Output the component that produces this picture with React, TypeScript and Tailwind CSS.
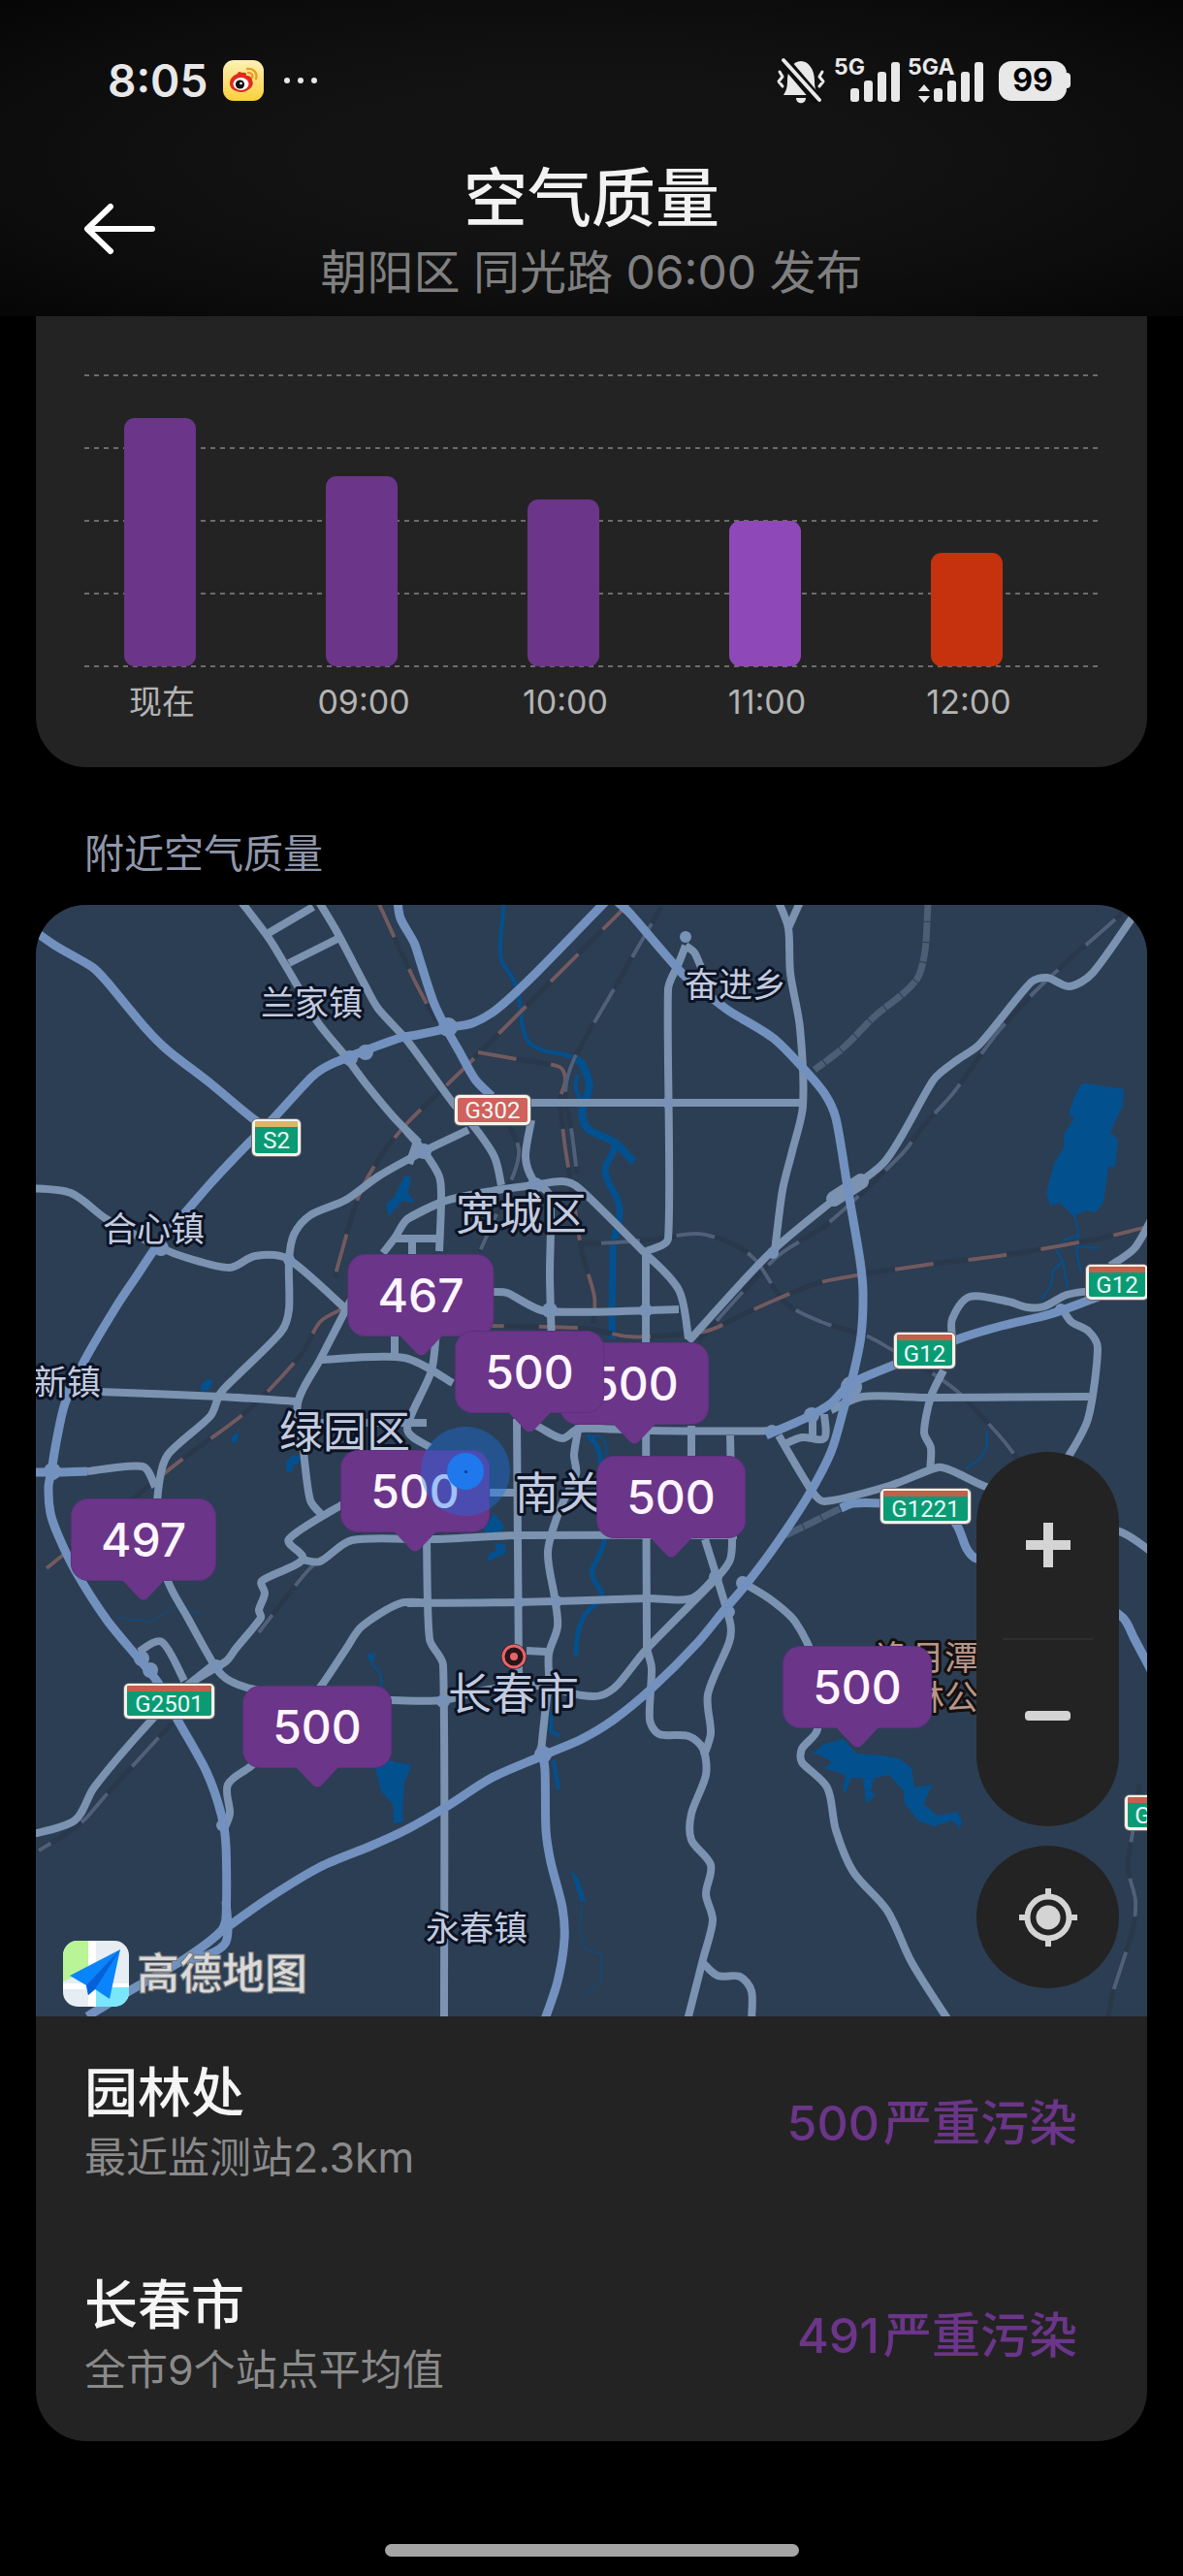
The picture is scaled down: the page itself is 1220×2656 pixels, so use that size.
import { useId } from "react";

// Map drawing units: the tile starts at (37, 933) and is 1146 wide and high
const MAP = { x: 37, y: 933, size: 1146 };

const hours = [
  { label: "现在", percent: 85, color: "bg-[#6b3589]" },
  { label: "09:00", percent: 65, color: "bg-[#6b3589]" },
  { label: "10:00", percent: 57, color: "bg-[#6b3589]" },
  { label: "11:00", percent: 50, color: "bg-[#8f48b8]" },
  { label: "12:00", percent: 39, color: "bg-[#c6320d]" },
];

const stations = [
  { name: "园林处", detail: "最近监测站2.3km", aqi: 500, level: "严重污染" },
  { name: "长春市", detail: "全市9个站点平均值", aqi: 491, level: "严重污染" },
];

const pins = [
  { aqi: 467, x: 434, y: 1293 },
  { aqi: 500, x: 654, y: 1384 },
  { aqi: 500, x: 546, y: 1372 },
  { aqi: 500, x: 692, y: 1501 },
  { aqi: 500, x: 428, y: 1495 },
  { aqi: 497, x: 148, y: 1545 },
  { aqi: 500, x: 327, y: 1738 },
  { aqi: 500, x: 884, y: 1697 },
];

const expressways = [
  "463,1060 430,1067 413,1070 377,1083 340,1098 322,1110 283,1152 257,1178 220,1217 193,1248 163,1283 140,1317 120,1347 87,1403 67,1447 58,1487 53,1517 50,1533 52,1560 60,1583 78,1620 110,1670 143,1710 163,1735 183,1773 213,1827 228,1870 233,1903 233,1977 227,1992 190,2020 133,2053 90,2079",
  "30,956 57,975 95,997 110,1012 150,1060 173,1083 217,1117 263,1155 283,1165",
  "233,1960 235,1990 232,2004 218,2014 192,2022",
  "233,1988 277,1957 330,1925 383,1903 420,1886 460,1863 507,1833 553,1813 567,1807 600,1793 633,1773 673,1740 720,1693 747,1660 770,1633 800,1593 833,1543 857,1497 870,1453 880,1417 888,1377 890,1333 887,1300 875,1230 862,1153 850,1127 827,1100 797,1070 753,1043 733,1028 703,1003 650,942 637,930",
  "624,930 553,1003 513,1040 487,1055 463,1059",
  "410,930 413,947 427,972 433,990 447,1033 460,1060 473,1083 490,1113 507,1130",
  "790,1480 833,1461 857,1447 877,1427 923,1407 990,1380 1033,1367 1083,1355 1130,1338 1190,1316",
  "867,1555 880,1550 910,1550 970,1555 987,1573 997,1597 1007,1607 1080,1620 1157,1667 1170,1690 1187,1722",
  "30,1518 60,1518 90,1517",
  "558,1800 562,1825 563,1887 568,1920 580,1967 582,2000 575,2043 562,2082",
];

const roads = [
  "249,930 277,967 293,993 307,1017 327,1053 357,1090 377,1117 407,1153 432,1178",
  "418,1165 437,1187 453,1213 455,1237 453,1290",
  "483,1165 437,1187 390,1213 357,1237 320,1253 303,1273 298,1300 298,1350 290,1373 243,1420 227,1437 217,1460 173,1500 164,1530 162,1580 173,1630 193,1667 223,1720 237,1733 263,1742 330,1752 403,1753 457,1753 503,1742 553,1738 600,1748 620,1748 637,1737 667,1700 740,1626 753,1608 755,1583 753,1480",
  "430,1177 422,1200",
  "329,930 347,960 377,1017 390,1040 420,1073 467,1137 490,1163 510,1193 517,1222",
  "277,962 323,935",
  "298,993 350,967",
  "30,1225 73,1230 110,1257 167,1287 193,1297 237,1307 263,1295 297,1298 357,1350",
  "453,1240 420,1257 408,1275 395,1292",
  "407,1277 453,1277",
  "420,1257 460,1238 513,1227 550,1222 580,1218 597,1225 663,1290 700,1330 710,1380",
  "425,1277 425,1295",
  "362,1340 330,1402 307,1447 313,1497 320,1547 333,1563",
  "330,1402 417,1400 467,1426",
  "407,1378 407,1402",
  "60,1433 103,1435 227,1440 307,1445",
  "327,1467 440,1467",
  "90,1517 147,1512 160,1533",
  "355,1550 298,1587 312,1608 270,1630 273,1643 267,1660 269,1668 243,1700 233,1713 193,1738 153,1777 97,1843 77,1877 30,1892",
  "312,1608 330,1610 363,1588 447,1587 537,1583 760,1583",
  "445,1653 413,1653 373,1677 357,1700 330,1740 290,1790 260,1820 235,1840 237,1870 230,1888",
  "420,1653 533,1652 667,1648 713,1648 740,1623",
  "450,1370 445,1413 420,1473 443,1492",
  "548,1155 542,1193 550,1217 567,1233 567,1317 569,1385",
  "533,1463 535,1727",
  "540,1462 557,1472 580,1483 597,1473 670,1475 797,1475 820,1467",
  "597,1470 592,1500 594,1520 577,1557 565,1600 572,1647 575,1677 566,1705 566,1733 562,1767 558,1805",
  "666,1290 667,1697 672,1720 670,1773 680,1788 710,1790 725,1803 728,1830 713,1870 713,1897 733,1923 728,1953 735,1980 725,2020 709,2083",
  "725,2024 740,2037 763,2038 775,2053 775,2083",
  "727,1587 753,1673 752,1693 730,1747 733,1787 726,1810",
  "440,1587 443,1690 457,1717 458,2083",
  "507,1332 523,1333 563,1352 700,1350",
  "710,1383 793,1293 860,1237 913,1197 963,1113 987,1093 1010,1077 1063,1013 1080,1008 1103,1017 1127,1003 1172,940",
  "713,1470 713,1510",
  "505,1539 535,1539",
  "803,1480 837,1537 850,1548 917,1532 967,1513 983,1517 1017,1533 1157,1580 1190,1602",
  "857,1454 890,1440 960,1441 1123,1440",
  "973,1413 960,1440 953,1477 960,1493 959,1517",
  "982,1380 982,1360 1000,1337 1040,1342 1060,1348 1077,1347 1100,1335 1125,1331",
  "1097,1352 1105,1363 1123,1373 1132,1390 1122,1463 1100,1505",
  "838,1463 838,1482",
  "850,1458 850,1483 827,1482 807,1490",
  "707,975 700,993 689,1020 689,1277 667,1290",
  "707,975 716,982 724,1000",
  "545,1137 828,1137",
  "803,930 813,957 815,1003 825,1060 828,1140 817,1187 807,1227 799,1290",
  "825,930 813,957",
  "1190,1252 1170,1287 1145,1305",
  "763,1630 793,1648 820,1672 840,1715 843,1783 827,1803 827,1817 853,1843 862,1887 880,1930 915,1970 940,2023 978,2083",
  "143,1703 167,1693 190,1733",
  "193,1738 222,1715",
  "543,1702 563,1703",
];

const plannedRoads = [
  "957,930 954,980 947,1007 933,1023 903,1047 870,1080 840,1103",
  "810,1583 843,1567 867,1555",
];

const brownRails = [
  "1187,1264 1133,1277 1050,1292 1007,1298 963,1303 883,1315 843,1323 800,1340 767,1355 730,1372 687,1377 647,1378 607,1370 563,1368 507,1367",
  "650,930 620,960 533,1047 475,1105 420,1158 392,1193 370,1233 345,1317",
  "390,930 427,1010 450,1053",
  "493,1085 533,1092 577,1100 583,1113 578,1133 582,1177 590,1227 600,1290 613,1337 612,1365",
  "352,1350 330,1363 310,1397 257,1453 190,1503 140,1543 48,1617",
];

const grayRails = [
  "1165,935 1077,1013 1030,1063 983,1127 953,1160 930,1190 853,1262 800,1297 720,1383",
  "682,935 633,1020 592,1092 583,1127 590,1170 595,1210",
  "600,1282 637,1281 680,1277 720,1272 757,1283 780,1300 810,1343 847,1363 893,1377 917,1390 960,1415 990,1437 1033,1483 1050,1505",
  "1175,1840 1168,1890 1163,1925 1171,1960 1168,1990 1147,2057 1143,2080",
  "177,1777 110,1850 83,1880 40,1908",
  "347,1593 317,1620 267,1683",
  "525,1160 535,1185 530,1210 495,1290",
];

const lakes = [
  "M1120 1117 1159 1123 1158 1140 1145 1167 1153 1175 1150 1203 1143 1203 1138 1240 1130 1250 1120 1248 1107 1254 1093 1240 1083 1243 1079 1230 1087 1200 1097 1183 1097 1170 1108 1153 1102 1150 1107 1133 1114 1119Z",
  "M838 1808 850 1798 870 1793 883 1808 910 1810 927 1813 940 1823 943 1843 962 1840 952 1860 967 1872 987 1868 992 1877 990 1885 982 1877 963 1883 947 1877 933 1860 932 1847 917 1830 902 1833 898 1847 903 1850 893 1860 890 1833 878 1833 872 1848 869 1846 872 1830 850 1823 858 1817 847 1810Z",
  "M400 1815 425 1820 417 1837 415 1873 417 1878 406 1880 405 1860 393 1847 387 1823Z",
  "M417 1213 424 1213 421 1230 428 1240 415 1238 401 1254 398 1242 406 1235Z",
  "M378 1706 388 1704 383 1716Z",
  "M498 1577 510 1560 521 1575 508 1585Z",
  "M510 1591 521 1592 521 1602 502 1610 505 1601 512 1600Z",
  "M207 1428 214 1422 220 1424 215 1434 207 1434Z",
  "M240 1480 246 1476 245 1486 238 1488Z",
  "M295 1507 302 1500 310 1502 308 1509 303 1510 301 1518 295 1517Z",
  "M588 1927 597 1938 604 1960 599 1961Z",
];

const rivers = [
  { d: "M519 930C520 950 513 970 517 990C522 1002 530 1005 533 1020C540 1040 534 1065 548 1077C560 1087 580 1084 592 1091", w: 4 },
  { d: "M592 1091C604 1096 606 1110 608 1120C605 1140 597 1135 602 1157C606 1170 622 1169 634 1178C640 1182 645 1190 654 1198", w: 8 },
  { d: "M596 1108C590 1120 596 1130 601 1137", w: 4 },
  { d: "M634 1178C636 1190 620 1200 625 1212C628 1225 640 1235 639 1250C640 1262 633 1270 632 1290L631 1380", w: 7 },
  { d: "M606 1480C618 1490 621 1500 619 1520L623 1590C618 1610 608 1615 611 1625C616 1640 624 1638 619 1650C605 1660 594 1670 594 1707", w: 5 },
  { d: "M610 1482C622 1476 630 1492 623 1502", w: 2 },
  { d: "M1108 1253 1113 1273 1098 1278 1090 1290 1096 1300 1086 1310 1084 1325 1074 1340M1112 1273 1110 1290 1115 1312M1096 1300 1101 1328M1110 1285 1133 1287", w: 2 },
  { d: "M384 1716 392 1725 394 1740", w: 2 },
  { d: "M1018 1475 1018 1492 1010 1505 996 1514", w: 2 },
  { d: "M120 1668 155 1672 180 1657 208 1664", w: 1 },
  { d: "M569 1766 568 1785 577 1790M571 1815 573 1828 576 1845", w: 4 },
  { d: "M600 1965 598 1990 603 2010 620 2014 620 2042 600 2058", w: 1 },
];

const interchanges = [
  [377, 1085, 8], [361, 1091, 8], [166, 1287, 8], [462, 1059, 10],
  [437, 1187, 8], [298, 1299, 6], [552, 1222, 8], [689, 1137, 6],
  [707, 966, 6], [54, 1517, 9], [878, 1430, 11], [837, 1459, 8],
  [1094, 1350, 6], [146, 1710, 8], [155, 1722, 8], [223, 1718, 7],
  [229, 1882, 6], [231, 1990, 6], [457, 1754, 7], [560, 1809, 9],
  [796, 1475, 6], [738, 1626, 7], [766, 1632, 7], [752, 1662, 6],
  [567, 1351, 8], [666, 1351, 7], [535, 1652, 6], [574, 1651, 6],
  [797, 1292, 6],
];

const places = [
  { name: "兰家镇", x: 269, y: 1047, size: 35 },
  { name: "合心镇", x: 106, y: 1280, size: 35 },
  { name: "奋进乡", x: 706, y: 1028, size: 35 },
  { name: "新镇", x: 34, y: 1438, size: 35 },
  { name: "永春镇", x: 439, y: 2001, size: 35 },
  { name: "宽城区", x: 470, y: 1268, size: 45 },
  { name: "绿园区", x: 288, y: 1493, size: 45 },
  { name: "南关区", x: 531, y: 1556, size: 45 },
  { name: "长春市", x: 462, y: 1763, size: 45 },
];

const shields = [
  { code: "S2", x: 259, y: 1153, w: 52, h: 40, band: "#d8b765", fill: "#0a9b75" },
  { code: "G302", x: 468, y: 1128, w: 80, h: 33, band: "", fill: "#d2605c" },
  { code: "G12", x: 921, y: 1373, w: 65, h: 39, band: "#c2604a", fill: "#0a9b75" },
  { code: "G12", x: 1119, y: 1303, w: 66, h: 38, band: "#c2604a", fill: "#0a9b75" },
  { code: "G1221", x: 907, y: 1534, w: 95, h: 38, band: "#c2604a", fill: "#0a9b75" },
  { code: "G2501", x: 127, y: 1735, w: 95, h: 38, band: "#c2604a", fill: "#0a9b75" },
  { code: "G25", x: 1159, y: 1850, w: 66, h: 38, band: "#c2604a", fill: "#0a9b75" },
];

// Rounds a list of "x,y" points into one continuous path
function smooth(list: string) {
  const p = list.split(" ").map((s) => s.split(",").map(Number));
  let d = `M${p[0][0]} ${p[0][1]}`;
  for (let i = 0; i < p.length - 1; i++) {
    const a = p[i - 1] || p[i];
    const b = p[i];
    const c = p[i + 1];
    const e = p[i + 2] || c;
    const len = Math.hypot(c[0] - b[0], c[1] - b[1]);
    const t1 = Math.min(1 / 6, (len * 0.3) / (Math.hypot(c[0] - a[0], c[1] - a[1]) || 1));
    const t2 = Math.min(1 / 6, (len * 0.3) / (Math.hypot(e[0] - b[0], e[1] - b[1]) || 1));
    d += `C${b[0] + (c[0] - a[0]) * t1} ${b[1] + (c[1] - a[1]) * t1} ${c[0] - (e[0] - b[0]) * t2} ${c[1] - (e[1] - b[1]) * t2} ${c[0]} ${c[1]}`;
  }
  return d;
}

const left = (x: number) => `${((x - MAP.x) / MAP.size) * 100}%`;
const top = (y: number) => `${((y - MAP.y) / MAP.size) * 100}%`;

const WeiboIcon = () => {
  const id = useId();
  return (
    <svg viewBox="0 0 42 42" className="size-[42px]" aria-label="微博">
      <defs>
        <linearGradient id={id} x1="0" y1="0" x2="0" y2="1">
          <stop offset="0" stopColor="#fdf1b4" />
          <stop offset="1" stopColor="#fbd03c" />
        </linearGradient>
      </defs>
      <rect width="42" height="42" rx="11" fill={`url(#${id})`} />
      <path d="M7 24C7 18 12 15 15 14c0-2 3-3 4-1 3-1 6 0 5 3 4 0 6 2 6 5 2 3 0 7-3 9-4 3-9 4-13 2C10 31 7 28 7 24Z" fill="#e02a1e" />
      <ellipse cx="18.500" cy="24.500" rx="8" ry="6.500" fill="#fff" />
      <circle cx="17.500" cy="25" r="4.600" fill="#111" />
      <circle cx="18.500" cy="24" r="1.300" fill="#fff" />
      <path d="M25 9c6-1 11 4 9 10M26 13c3 0 5 2 4 5" fill="none" stroke="#ec9b26" strokeWidth="2.400" strokeLinecap="round" />
    </svg>
  );
};

const MutedBell = () => (
  <svg viewBox="0 0 52 48" className="h-12 w-[52px]" fill="none" aria-label="静音">
    <path d="M8 39c3-5 4-8 4-15C12 13 18 4 26 4s14 9 14 20c0 7 1 10 4 15Z" fill="#e8e8e8" />
    <path d="M21 42h10c0 7-10 7-10 0Z" fill="#e8e8e8" />
    <path d="M8 3 44 45" stroke="#0d0d0d" strokeWidth="11" />
    <path d="M8 3 45 44" stroke="#e8e8e8" strokeWidth="4" strokeLinecap="round" />
    <path d="M4 15l3 5-4 5 4 5M48 15l-3 5 4 5-4 5" stroke="#e8e8e8" strokeWidth="3" strokeLinecap="round" strokeLinejoin="round" />
  </svg>
);

const SignalBars = () => (
  <>
    <rect x="0" y="32" width="9" height="14" rx="3" />
    <rect x="14" y="24" width="9" height="22" rx="3" />
    <rect x="28" y="15" width="9" height="31" rx="3" />
    <rect x="42" y="5" width="9" height="41" rx="3" />
  </>
);

const Signal5G = () => (
  <svg viewBox="0 0 68 48" className="h-12 w-[68px] overflow-visible" fill="#e8e8e8">
    <text x="0" y="18" fontFamily="Inter, sans-serif" fontSize="23" fontWeight="700">5G</text>
    <g transform="translate(17 0)">
      <SignalBars />
    </g>
  </svg>
);

const Signal5GA = () => (
  <svg viewBox="0 0 78 48" className="h-12 w-[78px] overflow-visible" fill="#e8e8e8">
    <text x="0" y="18" fontFamily="Inter, sans-serif" fontSize="23" fontWeight="700">5GA</text>
    <path d="M17 28l6 7H11ZM17 47l-6-7h12Z" />
    <g transform="translate(27 0)">
      <SignalBars />
    </g>
  </svg>
);

const StatusBar = () => (
  <div className="flex h-[166px] items-center justify-between pr-[116px] pl-[111px] text-[#e8e8e8]">
    <div className="flex items-center gap-4">
      <span className="text-[46px] leading-none font-semibold">8:05</span>
      <WeiboIcon />
      <svg viewBox="0 0 36 8" className="ml-1 h-2 w-9" fill="#e8e8e8">
        <circle cx="4" cy="4" r="3" />
        <circle cx="18" cy="4" r="3" />
        <circle cx="32" cy="4" r="3" />
      </svg>
    </div>
    <div className="flex items-center gap-2">
      <MutedBell />
      <Signal5G />
      <Signal5GA />
      <div className="ml-2 flex items-center">
        <span className="flex h-[41px] w-[70px] items-center justify-center rounded-[13px] bg-[#e8e8e8] text-[32px] leading-none font-bold text-black">
          99
        </span>
        <span className="h-4 w-1 rounded-r bg-[#e8e8e8]" />
      </div>
    </div>
  </div>
);

const Header = () => (
  <header className="bg-[radial-gradient(ellipse_at_center,#131313_30%,#0f0f0f_60%,#060606)]">
    <StatusBar />
    <div className="grid grid-cols-[1fr_auto_1fr] pb-[6px]">
      <button type="button" aria-label="返回" className="flex h-[140px] items-center pl-[86px]">
        <svg viewBox="0 0 76 54" className="h-[54px] w-[76px]" fill="none" stroke="#fff" strokeWidth="6" strokeLinecap="round" strokeLinejoin="round">
          <path d="M71 27H5M28 4 4 27l24 23" />
        </svg>
      </button>
      <div className="text-center">
        <h1 className="text-[66px] leading-[76px] font-medium text-[#f2f2f2]">空气质量</h1>
        <p className="text-[48px] leading-[78px] text-[#808080]">朝阳区 同光路 06:00 发布</p>
      </div>
    </div>
  </header>
);

const GridLine = () => (
  <svg className="h-[2px] w-full" aria-hidden="true">
    <line x1="0" y1="1" x2="100%" y2="1" stroke="#6c6c6c" strokeWidth="2" strokeDasharray="5 5" />
  </svg>
);

const HourlyChart = () => (
  <section className="rounded-b-[52px] bg-[#232323] pt-[60px] pb-[42px]">
    <div className="relative h-[302px]">
      <div className="absolute inset-x-[50px] inset-y-0 flex flex-col justify-between">
        {[0, 1, 2, 3, 4].map((line) => (
          <GridLine key={line} />
        ))}
      </div>
      <div className="relative grid h-[301px] grid-cols-5 items-end pr-[82px] pl-6">
        {hours.map(({ label, percent, color }) => (
          <div
            key={label}
            className={`w-[74px] justify-self-center rounded-[11px] ${color}`}
            style={{ height: `${percent}%` }}
          />
        ))}
      </div>
    </div>
    <div className="grid grid-cols-5 pt-[11px] pr-20 pl-[26px] text-center text-[34px] leading-[50px] text-[#b4b4b4]">
      {hours.map(({ label }) => (
        <span key={label}>{label}</span>
      ))}
    </div>
  </section>
);

const Shield = ({ code, x, y, w, h, band, fill }: (typeof shields)[number]) => (
  <g>
    <rect x={x} y={y} width={w} height={h} rx="6" fill="#6d6a70" />
    <rect x={x + 1} y={y + 1} width={w - 2} height={h - 2} rx="5" fill="#f6f2ea" />
    <rect x={x + 4} y={y + 4} width={w - 8} height={h - 8} rx="2" fill={fill} />
    {band && <rect x={x + 4} y={y + 3} width={w - 8} height="6" rx="1" fill={band} />}
    <text
      x={x + w / 2}
      y={y + h / 2 + (band ? 11 : 8)}
      textAnchor="middle"
      fontFamily="Roboto, sans-serif"
      fontSize="24"
      fill="#e9fbf6"
    >
      {code}
    </text>
  </g>
);

const MapDrawing = () => (
  <svg
    viewBox={`${MAP.x} ${MAP.y} ${MAP.size} ${MAP.size}`}
    className="block size-full"
    fill="none"
    strokeLinejoin="round"
    aria-label="长春市地图"
  >
    {lakes.map((d) => (
      <path key={d} d={d} fill="#03508f" />
    ))}
    {rivers.map(({ d, w }) => (
      <path key={d} d={d} stroke="#03508f" strokeWidth={w} />
    ))}
    {[...brownRails, ...grayRails].map((line) => (
      <path key={line} d={smooth(line)} stroke="#2a384b" strokeWidth="5" />
    ))}
    {brownRails.map((line) => (
      <path key={line} d={smooth(line)} stroke="#715a60" strokeWidth="4" strokeDasharray="40 36" />
    ))}
    {grayRails.map((line) => (
      <path key={line} d={smooth(line)} stroke="#50607a" strokeWidth="4" strokeDasharray="40 38" strokeDashoffset="-20" />
    ))}
    {plannedRoads.map((line) => (
      <path key={line} d={smooth(line)} stroke="#4a5e76" strokeWidth="7" strokeDasharray="20 1" />
    ))}
    {roads.map((line) => (
      <path key={line} d={smooth(line)} stroke="#7b93b0" strokeWidth="8" />
    ))}
    <path d="M860 1236 888 1218" stroke="#7b93b0" strokeWidth="16" strokeLinecap="round" />
    {interchanges.map(([cx, cy, r]) => (
      <circle key={`${cx}-${cy}`} cx={cx} cy={cy} r={r} fill="#7892b7" />
    ))}
    {expressways.map((line) => (
      <path key={line} d={smooth(line)} stroke="#7291bf" strokeWidth="9" />
    ))}
    <circle cx="530" cy="1708" r="13" fill="#2a1518" />
    <circle cx="530" cy="1708" r="11" stroke="#e8646c" strokeWidth="3" />
    <circle cx="530" cy="1708" r="4" fill="#e8646c" />
    {shields.map((shield) => (
      <Shield key={`${shield.code}-${shield.x}`} {...shield} />
    ))}
    <g
      fontFamily="'Noto Sans CJK SC', sans-serif"
      stroke="#0b1324"
      strokeWidth="6"
      style={{ paintOrder: "stroke" }}
    >
      {places.map(({ name, x, y, size }) => (
        <text key={name} x={x} y={y} fontSize={size} fill="#c3cbdf">
          {name}
        </text>
      ))}
      <g fontSize="35" fill="#b8968a" stroke="#14100f">
        <text x="904" y="1722">净月潭国家</text>
        <text x="904" y="1763">森林公园</text>
      </g>
    </g>
  </svg>
);

const AqiPin = ({ aqi, x, y }: (typeof pins)[number]) => (
  <div className="absolute -translate-x-1/2" style={{ left: left(x), top: top(y) }}>
    <div className="flex h-[85px] items-center rounded-[18px] border border-[#5f2f80] bg-[#6b3589] px-[30px] text-[48px] leading-none font-medium text-[#fdf5ff]">
      {aqi}
    </div>
    <svg viewBox="0 0 44 21" className="mx-auto -mt-px block h-[21px] w-11" fill="#6b3589">
      <path d="M0 0h44L27 18q-5 5-10 0Z" />
    </svg>
  </div>
);

const AmapLogo = () => (
  <div className="absolute bottom-[10px] left-7 flex items-center gap-2">
    <svg viewBox="0 0 68 68" className="size-[68px]">
      <clipPath id="amap">
        <rect width="68" height="68" rx="15" />
      </clipPath>
      <g clipPath="url(#amap)">
        <path d="M0 0h68v68H0Z" fill="#e6edf3" />
        <path d="M0 0h27v31L0 42Z" fill="#b9f596" />
        <path d="M26 0h8v68h-8ZM0 44h68v6H0Z" fill="#fff" />
        <path d="M34 48h34v20H34Z" fill="#7be6fb" />
      </g>
      <path d="M7 36 59 9 48 60 33 50l-7 6-2-10Z" fill="#0a84fb" />
      <path d="M59 9 24 46l2 10 7-6Z" fill="#0660d8" />
    </svg>
    <span className="text-[44px] leading-none font-bold text-[#dadada] [-webkit-text-stroke:1px_#777]">高德地图</span>
  </div>
);

const MapControls = () => (
  <div className="absolute right-[29px] bottom-[29px] flex w-[147px] flex-col gap-5 text-[#d4d4d4]">
    <div className="flex flex-col overflow-hidden rounded-full bg-[#232323]">
      <button type="button" aria-label="放大" className="flex h-48 items-center justify-center">
        <svg viewBox="0 0 48 48" className="size-12" stroke="currentColor" strokeWidth="10">
          <path d="M24 1v46M1 24h46" strokeLinejoin="round" />
        </svg>
      </button>
      <span className="mx-auto h-[2px] w-[93px] bg-[#2e2e2e]" />
      <button type="button" aria-label="缩小" className="flex h-48 items-center justify-center pb-9">
        <span className="h-[10px] w-[47px] rounded-sm bg-[#d4d4d4]" />
      </button>
    </div>
    <button type="button" aria-label="定位" className="flex h-[147px] items-center justify-center rounded-full bg-[#232323]">
      <svg viewBox="0 0 62 62" className="size-[62px]" fill="none" stroke="currentColor" strokeWidth="6">
        <circle cx="31" cy="31" r="21.500" />
        <circle cx="31" cy="31" r="12.500" fill="currentColor" stroke="none" />
        <path d="M31 1v8M31 53v8M1 31h8M53 31h8" />
      </svg>
    </button>
  </div>
);

const NearbyMap = () => (
  <div className="relative aspect-square overflow-hidden bg-[#2c3e53]">
    <MapDrawing />
    {pins.map((pin) => (
      <AqiPin key={`${pin.x}-${pin.y}`} {...pin} />
    ))}
    {/* current position */}
    <div
      className="absolute flex size-[92px] -translate-x-1/2 -translate-y-1/2 items-center justify-center rounded-full bg-[#1a73e8]/40"
      style={{ left: left(480), top: top(1517) }}
    >
      <span className="flex size-[38px] items-center justify-center rounded-full bg-[#1f78ec]">
        <span className="size-[3px] rounded-full bg-[#0b3c88]" />
      </span>
    </div>
    <AmapLogo />
    <MapControls />
  </div>
);

export default function App() {
  return (
    <div className="flex min-h-screen flex-col bg-black font-['Inter','Noto_Sans_CJK_SC',sans-serif]">
      <Header />
      <main className="px-[37px]">
        <HourlyChart />
        <h2 className="px-[50px] pt-[59px] pb-[23px] text-[41px] leading-[60px] text-[#9097ab]">
          附近空气质量
        </h2>
        <section className="overflow-hidden rounded-[52px] bg-[#232323]">
          <NearbyMap />
          <ul>
            {stations.map(({ name, detail, aqi, level }) => (
              <li key={name} className="flex h-[219px] items-center justify-between pr-[72px] pl-[50px]">
                <div>
                  <h3 className="text-[55px] leading-[70px] font-medium text-[#f5f5f5]">{name}</h3>
                  <p className="text-[43px] leading-[64px] text-[#8a8a8a]">{detail}</p>
                </div>
                <p className="flex items-center gap-1 text-[50px] leading-[64px] font-medium text-[#6b3589]">
                  <span>{aqi}</span>
                  <span>{level}</span>
                </p>
              </li>
            ))}
          </ul>
        </section>
      </main>
      <footer className="mt-auto flex justify-center pb-5">
        <span className="h-[13px] w-[427px] rounded-full bg-[#a5a5a5]" />
      </footer>
    </div>
  );
}
